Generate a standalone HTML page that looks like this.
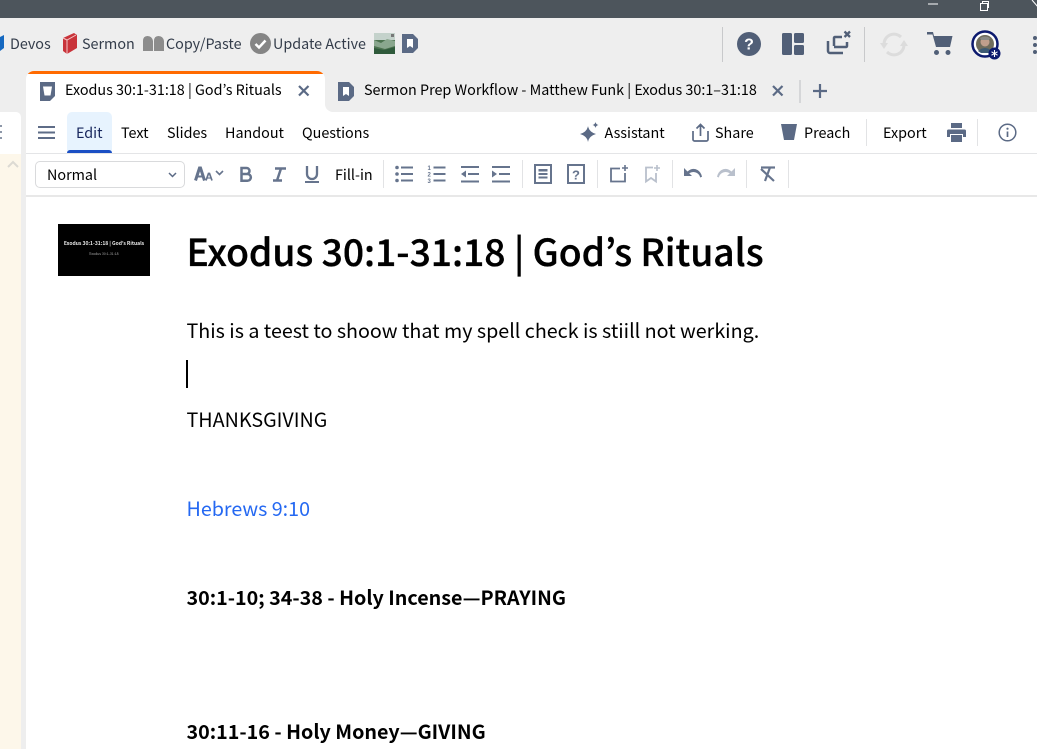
<!DOCTYPE html>
<html><head><meta charset="utf-8"><style>
*{box-sizing:border-box}
html,body{margin:0;padding:0;width:1037px;height:749px;overflow:hidden;background:#fff}
body{position:relative;font-family:"Noto Sans CJK JP","Liberation Sans",sans-serif;color:#000}
.a{position:absolute}
.t{position:absolute;white-space:nowrap;line-height:24px;height:24px;font-size:14.350px}
.b{font-size:19.700px;height:30px;line-height:30px}
.d{position:absolute;background:#e2e3e5;width:1px}
svg{position:absolute;overflow:visible}
</style></head><body>
<div class="a" style="left:0;top:0;width:1037px;height:18px;background:#4d555c"></div>
<div class="a" style="left:0;top:18px;width:1037px;height:94px;background:#eeeeee"></div>
<div class="a" style="left:0;top:112px;width:26px;height:637px;background:#eeeeee"></div>
<div class="a" style="left:0;top:112px;width:21px;height:42px;background:#fff;border-top-right-radius:5px"></div>
<div class="a" style="left:0;top:154px;width:21px;height:595px;background:#fdf7ea"></div>
<svg style="left:0;top:125px" width="3" height="16" fill="#8d97a8"><rect y="0" width="2" height="2"/><rect y="6" width="2" height="2"/><rect y="12" width="2" height="2"/></svg>
<svg style="left:0;top:0" width="1037" height="18"><path d="M928 4h10" stroke="#fff" fill="none"/><path d="M980.500 3.500h7v7h-7zM982.500 3.500v-2h6v6h-1" stroke="#fff" fill="none"/><path d="M1032 0l6 7" stroke="#fff" fill="none"/></svg>

<!-- bookmarks -->
<svg style="left:0;top:33px" width="5" height="20"><path d="M0 4l4-2v13l-4 3z" fill="#1568c0"/></svg>
<div class="t" style="left:10px;top:32px;color:#333c4a">Devos</div>
<svg style="left:62px;top:32px" width="16" height="23"><path d="M1 6l11-5 3 2v13l-10 6-4-3z" fill="#c9333a"/><path d="M5 8v14" stroke="#f3c5c5" stroke-width="1"/><path d="M1 6l4 2 9-5" stroke="#f3c5c5" fill="none"/></svg>
<div class="t" style="left:82px;top:32px;color:#333c4a">Sermon</div>
<svg style="left:143px;top:36px" width="21" height="15"><path d="M0 15V5q0-5 4.500-5T10 5v10zM11 15V5q0-5 4.500-5T21 5v10z" fill="#8c8c8c"/></svg>
<div class="t" style="left:166px;top:32px;color:#333c4a">Copy/Paste</div>
<svg style="left:250px;top:33px" width="21" height="21"><circle cx="10.500" cy="10.500" r="10.500" fill="#858585"/><path d="M5.500 11l3.500 3.500 6.500-7" stroke="#fff" stroke-width="2.500" fill="none"/></svg>
<div class="t" style="left:273px;top:32px;color:#333c4a">Update Active</div>
<svg style="left:374px;top:33px" width="21" height="21"><rect width="21" height="21" fill="#4d7350"/><rect width="21" height="7" fill="#c4d2cb"/><path d="M0 7l7 3 6-4 8 2v5l-10 3-11-3z" fill="#8aa78e"/><path d="M0 15l10 2 11-3v7H0z" fill="#2f5a3b"/><rect x="17" y="1" width="3" height="3" fill="#777"/></svg>
<svg style="left:402px;top:34px" width="17" height="19"><path d="M0 0H11l5 5v9l-5 5H0z" fill="#5b6a85"/><path d="M5 5h6v9l-3-2-3 2z" fill="#fff"/></svg>

<!-- right top icons -->
<div class="d" style="left:722px;top:27px;height:35px;background:#c8c9cb"></div>
<div class="d" style="left:864px;top:27px;height:35px;background:#c8c9cb"></div>
<svg style="left:737px;top:32px" width="24" height="24"><circle cx="12" cy="12" r="12" fill="#515f77"/><text x="12" y="17.500" text-anchor="middle" font-size="16" font-weight="700" fill="#fff" font-family="Liberation Sans">?</text></svg>
<svg style="left:782px;top:33px" width="22" height="22" fill="#515f77"><rect width="10" height="22" rx="1.500"/><rect x="12" width="10" height="10" rx="1.500"/><rect x="12" y="12" width="10" height="10" rx="1.500"/></svg>
<svg style="left:826px;top:31px" width="26" height="24" fill="none" stroke="#515f77" stroke-width="2.500"><path d="M2 10v10a2 2 0 0 0 2 2h13"/><path d="M8 15V7a1 1 0 0 1 1-1h7M8 16h12a1 1 0 0 0 1-1v-4"/><path d="M18.500 .500l5.500 5.500M24 .500L18.500 6" stroke-width="2.300"/></svg>
<svg style="left:880px;top:32px" width="28" height="25" fill="none" stroke="#dcdcdc" stroke-width="3"><path d="M4 12a10 10 0 0 1 17-7"/><path d="M24 13a10 10 0 0 1-17 7"/><path d="M0 11h8l-4 6zM28 14h-8l4-6z" fill="#dcdcdc" stroke="none"/></svg>
<svg style="left:927px;top:32px" width="26" height="24" fill="#515f77"><path d="M0 0h6l1 4h18.500L23 15H9L5.500 2.500H0z"/><circle cx="9.500" cy="20.500" r="2.500"/><circle cx="21" cy="20.500" r="2.500"/></svg>
<svg style="left:971px;top:30px" width="30" height="30"><circle cx="14" cy="14" r="12.500" fill="#fff" stroke="#0c1a6e" stroke-width="2.500"/><circle cx="14" cy="14" r="9" fill="#6f6c5c"/><circle cx="14" cy="12" r="4.500" fill="#c09f8c"/><path d="M9 8q5-3 10 0l-1 2h-8z" fill="#8a8a86"/><path d="M7 21q7-6 14 0l-3 2h-8z" fill="#3d5a73"/><circle cx="23.500" cy="23.500" r="6" fill="#0c1a6e"/><path d="M23.500 20v7M20.500 21.800l6 3.400M26.500 21.800l-6 3.400" stroke="#fff" stroke-width="1.100"/></svg>
<svg style="left:1032px;top:36px" width="5" height="18" fill="#515f77"><circle cx="3" cy="2" r="2"/><circle cx="3" cy="9" r="2"/><circle cx="3" cy="16" r="2"/></svg>

<!-- tabs -->
<div class="a" style="left:26px;top:71px;width:299px;height:41px;background:#fff;border-radius:8px 8px 0 0;overflow:hidden"><div style="height:3px;background:#ff6a00"></div></div>
<div class="a" style="left:325px;top:104px;width:8px;height:8px;background:#fff"></div>
<div class="a" style="left:325px;top:104px;width:8px;height:8px;background:#eee;border-bottom-left-radius:8px"></div>
<svg style="left:40px;top:82px" width="15" height="19"><path d="M0 0H15V14L10 19H0z" fill="#5b6a85"/><path d="M3 4.500h9l-1.500 9h-6z" fill="#fff"/></svg>
<div class="t" style="left:65px;top:78px">Exodus 30:1-31:18 | God’s Rituals</div>
<svg style="left:298px;top:85px" width="12" height="12"><path d="M1 1l9.500 9.500M10.500 1L1 10.500" stroke="#5b6a85" stroke-width="2.200"/></svg>
<svg style="left:338px;top:82px" width="17" height="19"><path d="M0 0H11l5 5v9l-5 5H0z" fill="#5b6a85"/><path d="M5 5h6v9l-3-2-3 2z" fill="#fff"/></svg>
<div class="t" style="left:364px;top:78px">Sermon Prep Workflow - Matthew Funk | Exodus 30:1–31:18</div>
<svg style="left:772px;top:85px" width="12" height="12"><path d="M1 1l9.500 9.500M10.500 1L1 10.500" stroke="#5b6a85" stroke-width="2.200"/></svg>
<div class="d" style="left:799px;top:80px;height:23px;background:#d5d6d8;width:1.500px"></div>
<svg style="left:813px;top:84px" width="14" height="14"><path d="M7 0v14M0 7h14" stroke="#5b6a85" stroke-width="2.200"/></svg>

<!-- menu bar -->
<svg style="left:38px;top:125px" width="17" height="15"><path d="M0 2h17M0 7.500h17M0 13h17" stroke="#5e6c87" stroke-width="2"/></svg>
<div class="a" style="left:67px;top:112px;width:45px;height:42px;background:#e7f3fe;border-radius:5px 5px 0 0"></div>
<div class="a" style="left:67px;top:150px;width:45px;height:4px;background:#1a4fc4;border-radius:3px 3px 0 0"></div>
<div class="t" style="left:76px;top:121px;color:#16255c">Edit</div>
<div class="t" style="left:121px;top:121px">Text</div>
<div class="t" style="left:167px;top:121px">Slides</div>
<div class="t" style="left:225px;top:121px">Handout</div>
<div class="t" style="left:302px;top:121px">Questions</div>
<svg style="left:580px;top:122px" width="19" height="20" fill="#5b6a85"><path d="M8 4q1 6 8 8-7 2-8 8-1-6-8-8 7-2 8-8z"/><path d="M15.500 0q.5 2.500 3 3-2.500.5-3 3-.5-2.500-3-3 2.500-.5 3-3z"/></svg>
<div class="t" style="left:604.500px;top:121px">Assistant</div>
<svg style="left:692px;top:123px" width="17" height="19" fill="none" stroke="#5b6a85" stroke-width="1.700"><path d="M1 8v8.500a1.500 1.500 0 0 0 1.500 1.500h12a1.500 1.500 0 0 0 1.500-1.500V8M8.500 13V1.500M4.500 5.500l4-4 4 4"/></svg>
<div class="t" style="left:715px;top:121px">Share</div>
<svg style="left:781px;top:124px" width="16" height="16"><path d="M0 0h16l-3 16H3z" fill="#5b6a85"/></svg>
<div class="t" style="left:804px;top:121px">Preach</div>
<div class="d" style="left:866px;top:119px;height:27px"></div>
<div class="t" style="left:883px;top:121px">Export</div>
<svg style="left:947px;top:123px" width="19" height="19" fill="#5b6a85"><rect x="4" y="0" width="11" height="5"/><path d="M1.500 6.500h16A1.500 1.500 0 0 1 19 8v6h-3v-3H3v3H0V8a1.500 1.500 0 0 1 1.500-1.500z"/><rect x="4" y="12" width="11" height="7"/></svg>
<div class="d" style="left:977px;top:119px;height:27px"></div>
<svg style="left:998px;top:123px" width="19" height="19" fill="none"><circle cx="9.500" cy="9.500" r="8.300" stroke="#5b6a85" stroke-width="1.500"/><path d="M9.500 8.500v5.500" stroke="#5b6a85" stroke-width="1.700"/><circle cx="9.500" cy="5.700" r="1.100" fill="#5b6a85"/></svg>
<div class="a" style="left:26px;top:153px;width:1011px;height:1px;background:#e4e5e7"></div>

<!-- format bar -->
<svg style="left:7px;top:160px" width="12" height="8"><path d="M1 7l5-5 5 5" stroke="#dcdad3" stroke-width="2" fill="none"/></svg>
<div class="a" style="left:35px;top:161px;width:150px;height:27px;border:1px solid #d9dadc;border-radius:5px"></div>
<div class="t" style="left:47px;top:163px">Normal</div>
<svg style="left:168px;top:172px" width="9" height="6"><path d="M1 1l3.500 3.500L8 1" stroke="#5b6a85" stroke-width="1.500" fill="none"/></svg>
<svg style="left:194px;top:167px" width="31" height="14"><path d="M1.500 13.500L5.500 1h1L10.500 13.500" stroke="#66748d" stroke-width="3" fill="none"/><path d="M3 9.500h7" stroke="#66748d" stroke-width="2"/><path d="M12 13.500l2.500-7h1l2.500 7" stroke="#66748d" stroke-width="1.700" fill="none"/><path d="M13 11h4" stroke="#66748d" stroke-width="1.200"/><path d="M22 4l3.500 3.500L29 4" stroke="#66748d" stroke-width="1.600" fill="none"/></svg>
<svg style="left:240px;top:167px" width="12" height="15" fill="none" stroke="#66748d" stroke-width="2.500"><path d="M1.500 1h5a3 3 0 0 1 0 6h-5zM1.500 7h6a3.300 3.300 0 0 1 0 6.700h-6z"/></svg>
<svg style="left:272px;top:167px" width="15" height="15" fill="none" stroke="#66748d" stroke-width="2.500"><path d="M3 1.500h11M1 13.500h9M9 1.500L5 13.500"/></svg>
<svg style="left:305px;top:166px" width="14" height="17" fill="none" stroke="#66748d" stroke-width="2.300"><path d="M2 0v8a5 5 0 0 0 10 0V0"/><path d="M0 16h14" stroke-width="2"/></svg>
<div class="t" style="left:335px;top:163px">Fill-in</div>
<div class="d" style="left:383px;top:160px;height:28px"></div>
<svg style="left:395px;top:165px" width="18" height="18" fill="#66748d"><circle cx="2" cy="2.500" r="1.800"/><circle cx="2" cy="9" r="1.800"/><circle cx="2" cy="15.500" r="1.800"/><rect x="6" y="1.500" width="12" height="2"/><rect x="6" y="8" width="12" height="2"/><rect x="6" y="14.500" width="12" height="2"/></svg>
<svg style="left:427px;top:165px" width="19" height="18" fill="#66748d"><rect x="6.500" y="1.500" width="12" height="2"/><rect x="6.500" y="8" width="12" height="2"/><rect x="6.500" y="14.500" width="12" height="2"/><text x="0.500" y="5" font-size="6" font-weight="700" font-family="Liberation Sans">1</text><text x="0.500" y="11.500" font-size="6" font-weight="700" font-family="Liberation Sans">2</text><text x="0.500" y="18" font-size="6" font-weight="700" font-family="Liberation Sans">3</text></svg>
<svg style="left:461px;top:166px" width="18" height="17" fill="#66748d"><rect width="18" height="2"/><rect y="14.500" width="18" height="2"/><rect x="7" y="7" width="11" height="2"/><path d="M5 4.500v7L0 8z"/></svg>
<svg style="left:492px;top:166px" width="18" height="17" fill="#66748d"><rect width="18" height="2"/><rect y="14.500" width="18" height="2"/><rect x="7" y="7" width="11" height="2"/><path d="M0 4.500v7L5 8z"/></svg>
<div class="d" style="left:522px;top:160px;height:28px"></div>
<svg style="left:534px;top:164px" width="18" height="20" fill="#66748d"><path fill-rule="evenodd" d="M0 0h18v20H0zM2 2v16h14V2z"/><rect x="4.500" y="5" width="9" height="2.500"/><rect x="4.500" y="9" width="9" height="2"/><rect x="4.500" y="12.500" width="9" height="2"/></svg>
<svg style="left:567px;top:164px" width="18" height="20"><path fill="#66748d" fill-rule="evenodd" d="M0 0h18v20H0zM2 2v16h14V2z"/><text x="9" y="15.500" text-anchor="middle" font-size="13" font-weight="700" fill="#66748d" font-family="Liberation Sans">?</text></svg>
<div class="d" style="left:597px;top:160px;height:28px"></div>
<svg style="left:610px;top:165px" width="18" height="18" fill="none" stroke="#66748d" stroke-width="1.800"><path d="M10 3.500H1v13h14V8"/><path d="M15 0v6M12 3h6" stroke-width="1.600"/></svg>
<svg style="left:645px;top:165px" width="15" height="18" fill="none" stroke="#b9c0cc" stroke-width="1.800"><path d="M8 2.500H1v14l5-3.500 5 3.500V8"/><path d="M12 0v6M9 3h6" stroke-width="1.600"/></svg>
<div class="d" style="left:672px;top:160px;height:28px"></div>
<svg style="left:684px;top:168px" width="18" height="12"><path d="M0 0v8h8L5.200 5.200Q9 2.800 13 5q2.500 1.500 3.200 4.500l1.800-.8Q17 4 13.500 2 8.500-.8 3.500 3.500z" fill="#66748d"/></svg>
<svg style="left:717px;top:168px" width="18" height="12"><path d="M18 0v8h-8l2.800-2.800Q9 2.800 5 5 2.500 6.500 1.800 9.500L0 8.700Q1 4 4.500 2 9.500-.8 14.500 3.500z" fill="#b9c0cc"/></svg>
<div class="d" style="left:746px;top:160px;height:28px"></div>
<svg style="left:760px;top:166px" width="16" height="16" fill="none" stroke="#66748d" stroke-width="2.200"><path d="M1 1.500h14"/><path d="M10 1.500L5 15M1 3l13 12"/></svg>
<div class="d" style="left:788px;top:160px;height:28px"></div>
<div class="a" style="left:26px;top:195px;width:1011px;height:2px;background:#e8e8e8"></div>

<!-- thumbnail -->
<div class="a" style="left:58px;top:224px;width:92px;height:52px;background:#000"></div>
<div class="a" style="left:58px;top:240px;width:92px;text-align:center;font-size:5px;line-height:7px;color:#e8e8e8;font-weight:700;white-space:nowrap">Exodus 30:1-31:18 | God’s Rituals</div>
<div class="a" style="left:58px;top:252px;width:92px;text-align:center;font-size:3.500px;line-height:6px;color:#aaa;white-space:nowrap">Exodus 30:1-31:18</div>

<!-- doc -->
<div class="t" style="left:186.500px;top:224px;height:52px;line-height:52px;font-size:37.200px;font-weight:500;-webkit-text-stroke:0.350px #000">Exodus 30:1-31:18 | God’s Rituals</div>
<div class="t b" style="left:186.500px;top:315px">This is a teest to shoow that my spell check is stiill not werking.</div>
<div class="a" style="left:186px;top:360px;width:2px;height:28px;background:#000"></div>
<div class="t b" style="left:186.500px;top:404px">THANKSGIVING</div>
<div class="t b" style="left:186.500px;top:493px;color:#2468f2">Hebrews 9:10</div>
<div class="t b" style="left:186.500px;top:582px;font-weight:700">30:1-10; 34-38 - Holy Incense—PRAYING</div>
<div class="t b" style="left:186.500px;top:716px;font-weight:700">30:11-16 - Holy Money—GIVING</div>
</body></html>
